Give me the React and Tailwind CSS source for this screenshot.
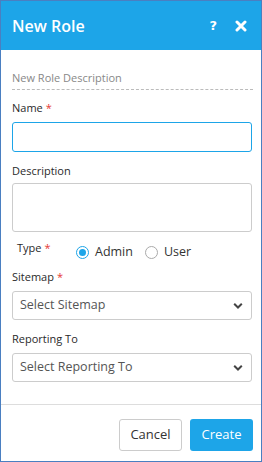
import React, { useState } from "react";

const Label = ({ children, required, className = "" }) => (
  <p className={`text-[11px] leading-[15px] text-[#2a2a2a] ${className}`}>
    {children}
    {required && <span className="text-[#e53935] ml-[3px]">*</span>}
  </p>
);

const Chevron = () => (
  <svg width="10" height="7" viewBox="0 0 10 7" className="absolute right-[8px] top-1/2 -translate-y-1/2">
    <path d="M1.2 1.3 L5 5 L8.8 1.3" fill="none" stroke="#444" strokeWidth="2" />
  </svg>
);

const Radio = ({ checked, label, onClick }) => (
  <label onClick={onClick} className="flex items-center gap-[6px] cursor-pointer h-[18px]">
    <span
      className={`w-[13px] h-[13px] rounded-full border flex items-center justify-center bg-white ${
        checked ? "border-[#1da5e8]" : "border-[#aaa]"
      }`}
    >
      {checked && <span className="w-[7px] h-[7px] rounded-full bg-[#1da5e8]" />}
    </span>
    <span className="text-[12.5px] leading-[18px] text-[#333]">{label}</span>
  </label>
);

const App = () => {
  const [type, setType] = useState("admin");

  return (
    <div className="w-[262px] h-[462px] border border-[#4a7fc1] bg-white flex flex-col font-['Open_Sans',sans-serif]">
      <div className="h-[49px] bg-[#1da5e8] flex items-center pl-[11px] pr-[14px]">
        <h1 className="text-white text-[16px] font-semibold flex-1 leading-none">New Role</h1>
        <span className="text-white text-[13px] font-extrabold mr-[18px] font-['DejaVu_Sans',sans-serif]">?</span>
        <svg width="12" height="12" viewBox="0 0 12 12">
          <path d="M2 2 L10 10 M10 2 L2 10" stroke="#fff" strokeWidth="3" strokeLinecap="round" />
        </svg>
      </div>

      <div className="flex-1 pl-[11px] pr-[8px] pt-[20px]">
        <p className="text-[11px] text-[#888] leading-[15px]">New Role Description</p>
        <div className="border-b border-dashed border-[#bbb] mt-[4px]" />

        <Label required className="mt-[10px]">Name</Label>
        <input className="mt-[7px] w-[240px] h-[30px] border border-[#1da5e8] rounded-[3px] outline-none px-2 text-[13px] block" />

        <Label className="mt-[11px]">Description</Label>
        <textarea className="mt-[5px] w-[240px] h-[49px] border border-[#ccc] rounded-[3px] outline-none px-2 resize-none block" />

        <div className="flex items-start mt-[8px]">
          <Label required className="ml-[5px] w-[59px]">Type</Label>
          <div className="flex items-center gap-[12px] mt-[3px]">
            <Radio checked={type === "admin"} label="Admin" onClick={() => setType("admin")} />
            <Radio checked={type === "user"} label="User" onClick={() => setType("user")} />
          </div>
        </div>

        <Label required className="mt-[8px]">Sitemap</Label>
        <div className="relative mt-[7px] w-[240px] h-[29px] border border-[#ccc] rounded-[3px] flex items-center pl-[7px]">
          <span className="text-[12.5px] text-[#555]">Select Sitemap</span>
          <Chevron />
        </div>

        <Label className="mt-[11px]">Reporting To</Label>
        <div className="relative mt-[7px] w-[240px] h-[29px] border border-[#ccc] rounded-[3px] flex items-center pl-[7px]">
          <span className="text-[12.5px] text-[#555]">Select Reporting To</span>
          <Chevron />
        </div>
      </div>

      <div className="border-t border-[#ddd] h-[57px] flex items-start justify-end gap-[8px] pr-[8px] pt-[14px]">
        <button className="w-[63px] h-[32px] border border-[#ccc] rounded-[3px] text-[13px] text-[#333] bg-white">
          Cancel
        </button>
        <button className="w-[63px] h-[32px] rounded-[3px] text-[13px] text-white bg-[#1da5e8]">
          Create
        </button>
      </div>
    </div>
  );
};

export default App;
